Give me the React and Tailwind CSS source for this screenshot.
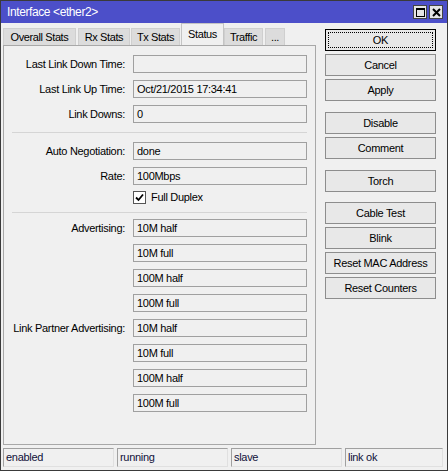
import React from 'react';

const font = { fontFamily: '"Liberation Sans", Arial, sans-serif' };

const Field = ({ label, value }) => (
  <div className="flex items-center h-[18px]">
    <div className="w-[129px] text-right pr-[8px] text-[11px] tracking-[-0.3px] text-black leading-none whitespace-nowrap">{label}</div>
    <div className="w-[174px] h-[18px] border border-[#a0a0a0] bg-[#f0f0f0] flex items-center px-[3px] text-[11px] tracking-[-0.3px] text-black leading-none whitespace-nowrap">
      {value}
    </div>
  </div>
);

const Sep = ({ className }) => <div className={`ml-[8px] w-[295px] h-px bg-[#d5d5d5] ${className}`} />;

const Btn = ({ children, focus }) => (
  <button
    className={`w-[111px] h-[22px] flex items-center justify-center text-[11px] tracking-[-0.3px] text-black bg-[#e8e8e8] ${
      focus ? 'border border-black' : 'border border-[#8d8d8d]'
    }`}
  >
    {focus ? (
      <span className="w-[105px] h-[16px] border border-dotted border-black flex items-center justify-center">
        {children}
      </span>
    ) : (
      children
    )}
  </button>
);

const Tab = ({ children, active, className }) =>
  active ? (
    <div className={`relative z-10 h-[22px] -mb-px flex items-center justify-center bg-[#f0f0f0] border border-b-0 border-[#c4c4c4] text-[11px] tracking-[-0.4px] text-black whitespace-nowrap ${className}`}>
      {children}
    </div>
  ) : (
    <div className={`h-[17px] mt-[5px] flex items-center justify-center bg-[#dcdcdc] border border-b-0 border-[#cfcfcf] text-[11px] tracking-[-0.4px] text-black whitespace-nowrap ${className}`}>
      {children}
    </div>
  );

export default function App() {
  const adv = ['10M half', '10M full', '100M half', '100M full'];
  return (
    <div style={font} className="w-[448px] h-[471px] bg-[#f0f0f0] border border-[#3a3a3a] flex flex-col select-none">
      {/* title bar */}
      <div className="h-[22px] bg-[#4c4fc9] flex items-center pl-[6px] pr-[4px] shrink-0">
        <span className="text-white text-[12px] tracking-[-0.4px] leading-none">Interface &lt;ether2&gt;</span>
        <div className="ml-auto flex gap-[2px]">
          <div className="w-[14px] h-[14px] bg-[#e4e4e4] border border-[#444] flex items-center justify-center">
            <div className="w-[9px] h-[9px] border border-black border-t-2" />
          </div>
          <div className="w-[14px] h-[14px] bg-[#e4e4e4] border border-[#444] flex items-center justify-center">
            <svg width="9" height="9" viewBox="0 0 9 9">
              <path d="M1 1 L8 8 M8 1 L1 8" stroke="black" strokeWidth="2" />
            </svg>
          </div>
        </div>
      </div>

      <div className="flex flex-1 min-h-0">
        {/* left side: tabs + panel */}
        <div className="ml-[2px] flex flex-col">
          <div className="flex h-[22px] items-start">
            <Tab className="w-[73px]">Overall Stats</Tab>
            <Tab className="w-[52px] ml-[2px]">Rx Stats</Tab>
            <Tab className="w-[49px] ml-[1px]">Tx Stats</Tab>
            <Tab active className="w-[43px] ml-[1px]">Status</Tab>
            <Tab className="w-[39px]">Traffic</Tab>
            <Tab className="w-[20px] ml-[2px]">...</Tab>
          </div>
          <div className="w-[313px] h-[400px] border border-[#a8a8a8] bg-[#f0f0f0] flex flex-col pt-[9px]">
            <div className="flex flex-col gap-[7px]">
              <Field label="Last Link Down Time:" value="" />
              <Field label="Last Link Up Time:" value="Oct/21/2015 17:34:41" />
              <Field label="Link Downs:" value="0" />
            </div>
            <Sep className="mt-[9px]" />
            <div className="flex flex-col gap-[7px] mt-[9px]">
              <Field label="Auto Negotiation:" value="done" />
              <Field label="Rate:" value="100Mbps" />
            </div>
            <div className="flex items-center ml-[129px] mt-[6px] h-[13px]">
              <div className="w-[13px] h-[13px] border border-[#555] bg-white flex items-center justify-center">
                <svg width="9" height="9" viewBox="0 0 9 9">
                  <path d="M1 4.5 L3.5 7 L8 1.5" fill="none" stroke="black" strokeWidth="1.8" />
                </svg>
              </div>
              <span className="ml-[5px] text-[11px] tracking-[-0.3px] text-black">Full Duplex</span>
            </div>
            <Sep className="mt-[8px]" />
            <div className="flex flex-col gap-[7px] mt-[6px]">
              {adv.map((v, i) => (
                <Field key={'a' + i} label={i === 0 ? 'Advertising:' : ''} value={v} />
              ))}
              {adv.map((v, i) => (
                <Field key={'p' + i} label={i === 0 ? 'Link Partner Advertising:' : ''} value={v} />
              ))}
            </div>
          </div>
        </div>

        {/* right side: buttons */}
        <div className="ml-[9px] pt-[6px] flex flex-col">
          <div className="flex flex-col gap-[3px]">
            <Btn focus>OK</Btn>
            <Btn>Cancel</Btn>
            <Btn>Apply</Btn>
          </div>
          <div className="flex flex-col gap-[3px] mt-[11px]">
            <Btn>Disable</Btn>
            <Btn>Comment</Btn>
          </div>
          <div className="flex flex-col gap-[3px] mt-[11px]">
            <Btn>Torch</Btn>
          </div>
          <div className="flex flex-col gap-[3px] mt-[10px]">
            <Btn>Cable Test</Btn>
            <Btn>Blink</Btn>
            <Btn>Reset MAC Address</Btn>
            <Btn>Reset Counters</Btn>
          </div>
        </div>
      </div>

      {/* status bar */}
      <div className="h-[19px] mt-[2px] mb-[3px] ml-[2px] mr-[4px] flex gap-[3px] shrink-0">
        {['enabled', 'running', 'slave', 'link ok'].map((s, i) => (
          <div
            key={s}
            className={`${i < 3 ? 'w-[111px]' : 'flex-1'} h-[19px] border border-[#a0a0a0] border-r-[#e0e0e0] border-b-[#e0e0e0] flex items-center px-[2px] text-[11px] tracking-[-0.3px] text-[#10103a]`}
          >
            {s}
          </div>
        ))}
      </div>
    </div>
  );
}
